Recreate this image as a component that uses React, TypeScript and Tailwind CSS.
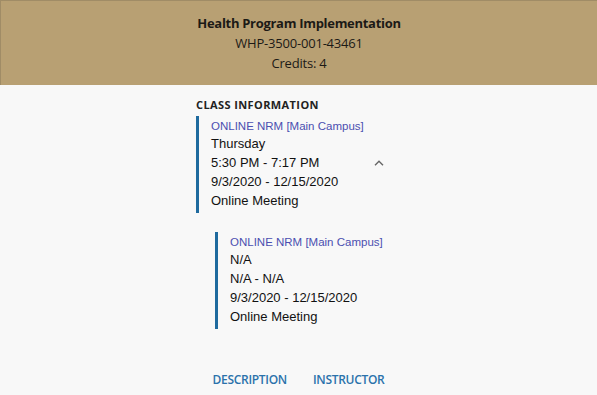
import React from "react";

interface Meeting {
  location: string;
  day: string;
  time: string;
  dates: string;
  method: string;
}

const meetings: Meeting[] = [
  {
    location: "ONLINE NRM [Main Campus]",
    day: "Thursday",
    time: "5:30 PM - 7:17 PM",
    dates: "9/3/2020 - 12/15/2020",
    method: "Online Meeting",
  },
  {
    location: "ONLINE NRM [Main Campus]",
    day: "N/A",
    time: "N/A - N/A",
    dates: "9/3/2020 - 12/15/2020",
    method: "Online Meeting",
  },
];

const MeetingBlock: React.FC<{ m: Meeting; chevron?: boolean }> = ({ m, chevron }) => (
  <div className="flex border-l-[3px] border-[#1f6a9e] pl-3 pt-[2px] pb-[3px]">
    <div className="flex-1 text-[13px] leading-[19px] text-[#111]">
      <div className="text-[11.5px] leading-[16px] text-[#4b4fb0]">{m.location}</div>
      <div>{m.day}</div>
      <div>{m.time}</div>
      <div>{m.dates}</div>
      <div>{m.method}</div>
    </div>
    {chevron && (
      <div className="pt-[42px] pr-[17px]">
        <svg width="10" height="6" viewBox="0 0 10 6" fill="none">
          <path d="M1 5.2 L5 1.2 L9 5.2" stroke="#666" strokeWidth="1.4" />
        </svg>
      </div>
    )}
  </div>
);

export default function App() {
  return (
    <div className="w-[597px] h-[395px] bg-[#f8f8f8] overflow-hidden font-['Liberation_Sans',Arial,sans-serif]">
      {/* Header */}
      <div className="h-[85px] bg-[#b8a073] border-t border-l border-[#a08c66] flex flex-col items-center pt-[12px] text-[#1c1a16] font-['Open_Sans',sans-serif]">
        <div className="text-[13px] leading-[20px] font-bold tracking-[-0.3px]">
          Health Program Implementation
        </div>
        <div className="text-[13px] leading-[20px] tracking-[-0.2px]">WHP-3500-001-43461</div>
        <div className="text-[13px] leading-[20px] tracking-[-0.2px]">Credits: 4</div>
      </div>

      {/* Class information */}
      <div className="w-[205px] mx-auto pt-[13px]">
        <div className="text-[11px] leading-[14px] font-bold tracking-[0.4px] text-[#222] font-['Open_Sans',sans-serif] mb-[4px]">
          CLASS INFORMATION
        </div>
        <MeetingBlock m={meetings[0]} chevron />
        <div className="ml-[19px] mt-[19px]">
          <MeetingBlock m={meetings[1]} />
        </div>
      </div>

      {/* Tabs */}
      <div className="flex justify-center gap-[26px] pt-[42px] text-[12px] font-semibold text-[#2b72ab] font-['Open_Sans',sans-serif] tracking-[-0.3px]">
        <span>DESCRIPTION</span>
        <span>INSTRUCTOR</span>
      </div>
    </div>
  );
}
